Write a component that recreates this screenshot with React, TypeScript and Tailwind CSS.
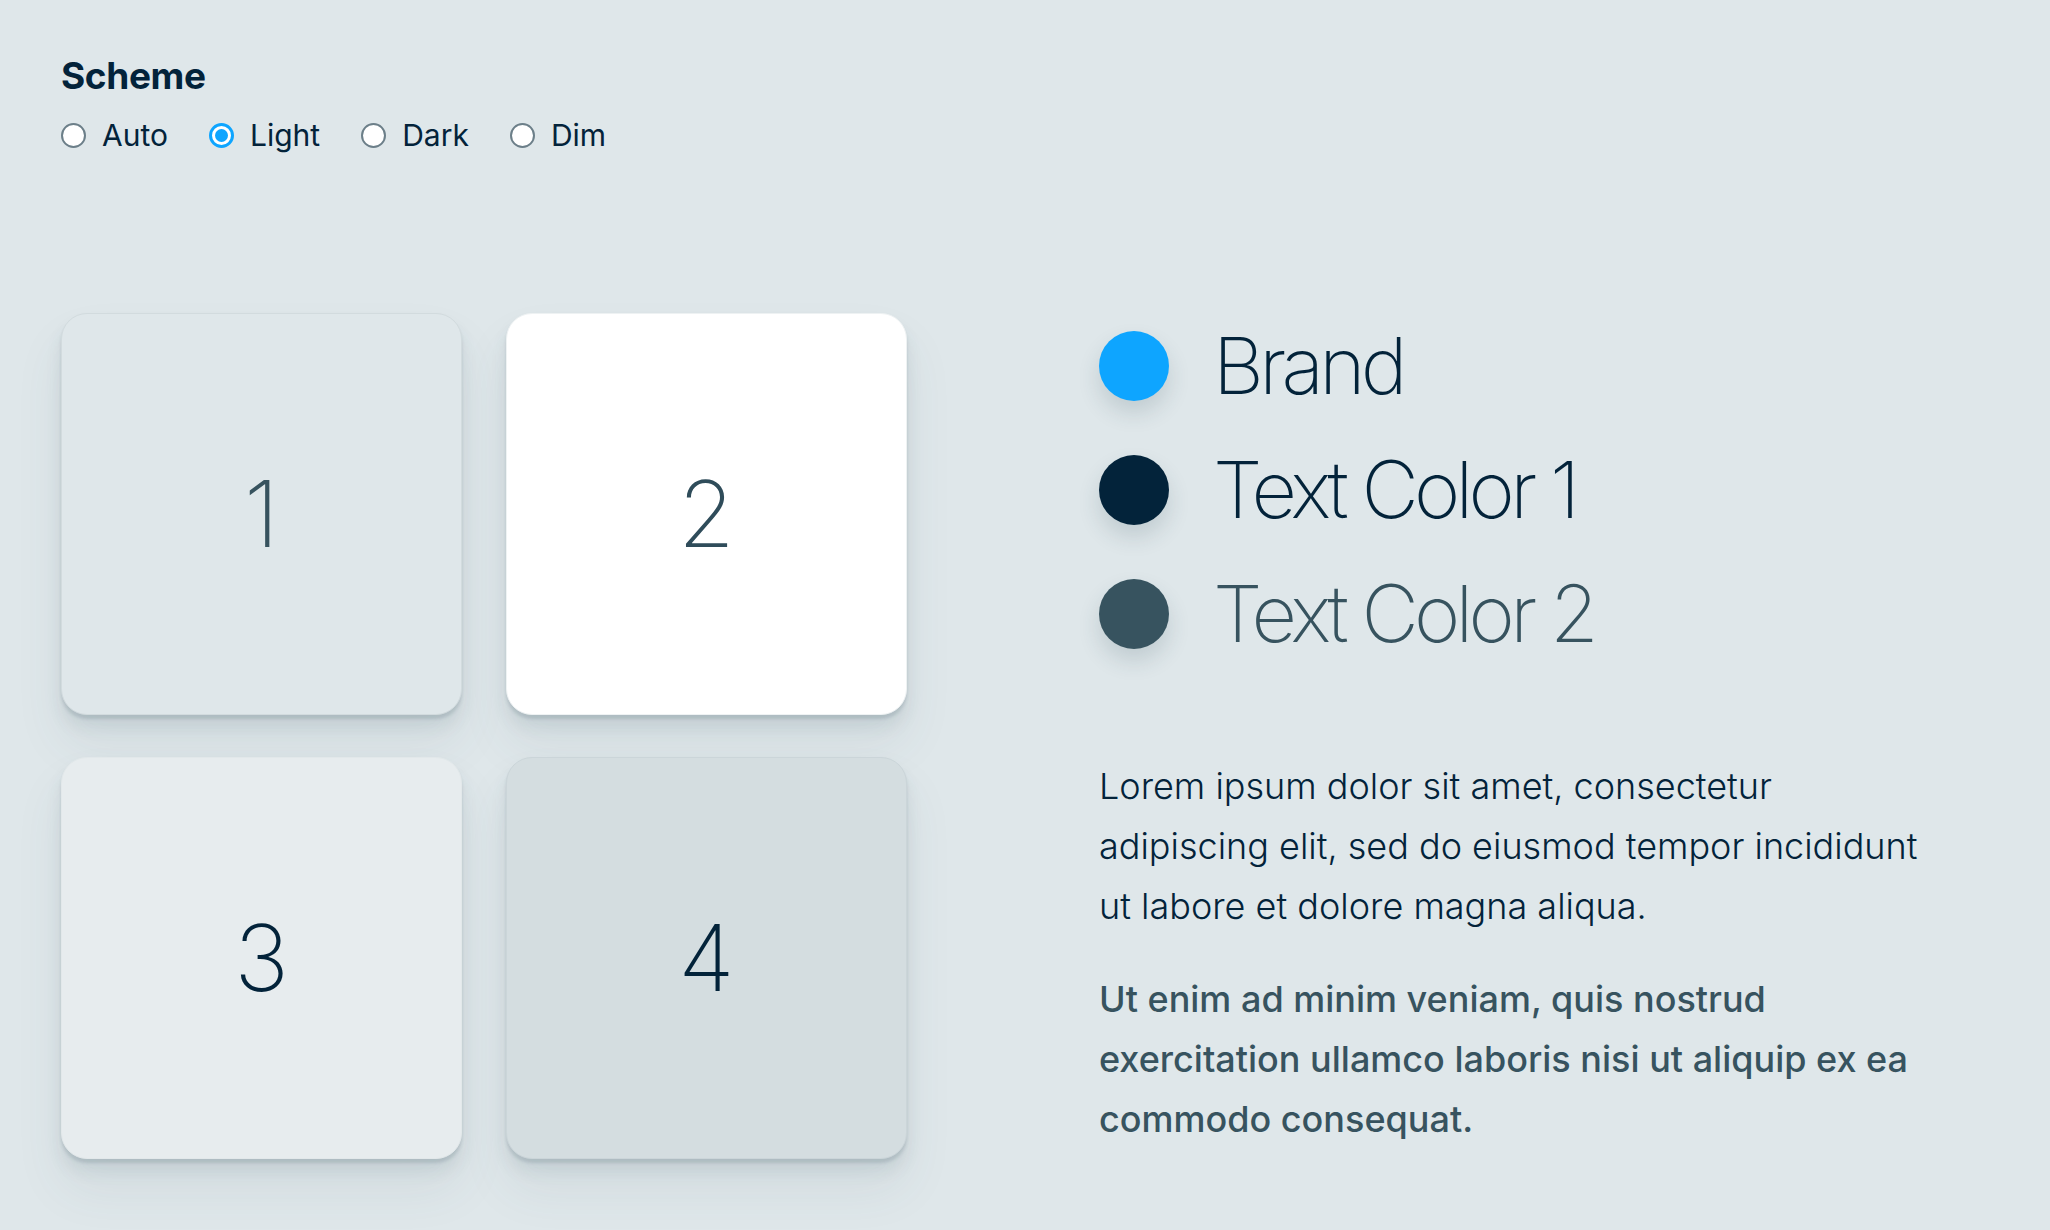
const schemes = [
  { name: "Auto", checked: false },
  { name: "Light", checked: true },
  { name: "Dark", checked: false },
  { name: "Dim", checked: false },
];

const swatches = [
  { label: "Brand", dot: "bg-[#0ea5ff]", text: "text-[#03233a]" },
  { label: "Text Color 1", dot: "bg-[#03233a]", text: "text-[#03233a]" },
  { label: "Text Color 2", dot: "bg-[#37535f]", text: "text-[#37535f]" },
];

const cards = [
  {
    n: "1",
    box: "bg-[#dfe7ea] border border-[#d2dbde]",
    text: "text-[#37535f]",
  },
  { n: "2", box: "bg-white border border-[#eef2f3]", text: "text-[#2f4c5a]" },
  { n: "3", box: "bg-[#e7ecee] border border-[#e2e8ea]", text: "text-[#03233a]" },
  { n: "4", box: "bg-[#d4dde0] border border-[#cbd5d9]", text: "text-[#03233a]" },
];

function Radio({ checked }: { checked: boolean }) {
  if (checked) {
    return (
      <span className="w-[25px] h-[25px] rounded-full border-[3px] border-[#0ea5ff] bg-white flex items-center justify-center">
        <span className="w-[13px] h-[13px] rounded-full bg-[#0ea5ff]" />
      </span>
    );
  }
  return (
    <span className="w-[25px] h-[25px] rounded-full border-2 border-[#6c7f89] bg-white" />
  );
}

export default function App() {
  return (
    <main className="min-h-[1230px] w-full bg-[#dfe7ea] px-[61px] pt-[55px] font-['Inter','Liberation_Sans',sans-serif] text-[#03233a]">
      <h2 className="text-[37px] leading-[42px] font-bold tracking-[-0.01em]">
        Scheme
      </h2>
      <div className="mt-[20px] flex items-center gap-[41px]">
        {schemes.map((s) => (
          <label key={s.name} className="flex items-center gap-[16px]">
            <Radio checked={s.checked} />
            <span className="text-[30px] leading-[36px]">{s.name}</span>
          </label>
        ))}
      </div>

      <section className="mt-[160px] flex items-start">
        <div className="grid grid-cols-[401px_401px] gap-x-[44px] gap-y-[42px]">
          {cards.map((c) => (
            <div
              key={c.n}
              className={`h-[402px] rounded-[26px] flex items-center justify-center shadow-[0_4px_3px_rgba(60,90,100,0.16),0_12px_16px_rgba(60,90,100,0.10),0_30px_50px_rgba(60,90,100,0.08)] ${c.box}`}
            >
              <span
                className={`text-[92px] leading-none font-extralight ${c.text}`}
              >
                {c.n}
              </span>
            </div>
          ))}
        </div>

        <div className="ml-[192px] pt-[13px] w-[840px]">
          <ul className="flex flex-col gap-[45px]">
            {swatches.map((s) => (
              <li key={s.label} className="flex items-center gap-[44px]">
                <span
                  className={`w-[70px] h-[70px] rounded-full shrink-0 shadow-[0_12px_22px_rgba(40,70,80,0.16)] ${s.dot}`}
                />
                <span
                  className={`text-[79px] leading-none font-extralight tracking-[-0.06em] ${s.text}`}
                >
                  {s.label}
                </span>
              </li>
            ))}
          </ul>

          <p className="mt-[103px] text-[36px] leading-[60px] font-light text-[#03233a]">
            Lorem ipsum dolor sit amet, consectetur adipiscing elit, sed do
            eiusmod tempor incididunt ut labore et dolore magna aliqua.
          </p>
          <p className="mt-[33px] text-[36px] leading-[60px] font-[450] text-[#37535f]">
            Ut enim ad minim veniam, quis nostrud exercitation ullamco laboris
            nisi ut aliquip ex ea commodo consequat.
          </p>
        </div>
      </section>
    </main>
  );
}
